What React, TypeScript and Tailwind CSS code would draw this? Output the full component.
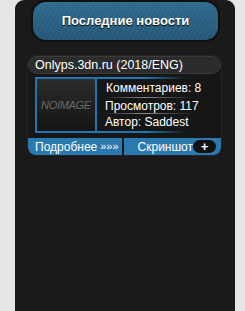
import React from 'react';

const news = {
  title: 'Onlyps.3dn.ru (2018/ENG)',
  comments: 8,
  views: 117,
  author: 'Saddest',
};

const Divider = () => (
  <div className="h-px w-[90px] ml-[6px] shrink-0 bg-[linear-gradient(90deg,transparent,#8a8a8a_45%,transparent)]" />
);

const BlueLine = () => (
  <div className="h-[2px] w-[90px] shrink-0 bg-[linear-gradient(90deg,#1e77b0,#1e77b0_55%,transparent)]" />
);

const App = () => {
  return (
    <div className="w-[245px] h-[311px] overflow-hidden bg-[#e6e6e6] font-['Liberation_Sans',sans-serif]">
      {/* Panel */}
      <div className="ml-[15px] mt-2 w-[220px] h-[330px] rounded-t-[9px] bg-[#1a1a1a]">
        {/* Header tab */}
        <div className="-mt-2 ml-[16px] mr-[15px] h-[42px] rounded-[15px] border-2 border-[#0f0f0f] bg-[#285d7e] bg-[repeating-linear-gradient(120deg,rgba(255,255,255,0.05)_0px,rgba(255,255,255,0.05)_1px,transparent_1px,transparent_4px),linear-gradient(180deg,#2f6b8f_0%,#245676_100%)] flex items-center justify-center">
          <span className="text-white font-bold text-[13px] [text-shadow:0_1px_1px_#000]">
            Последние новости
          </span>
        </div>

        {/* News item */}
        <div className="mt-[13px] ml-3 mr-[13px] rounded-[9px] bg-[#161616] border border-[#242424]">
          <div className="h-[18px] rounded-full bg-[#2c2c2c] border border-[#3a3a3a] flex items-center pl-[6px] text-white text-[12.5px] leading-none whitespace-nowrap">
            {news.title}
          </div>

          <div className="flex mt-[3px] pl-[7px]">
            <div className="w-[62px] h-[56px] shrink-0 border-2 border-[#1e77b0] bg-[linear-gradient(180deg,#2c2c2c,#141414)] flex items-center justify-center">
              <span className="text-[#6a6a6a] italic text-[11px] tracking-[-0.3px]">NOIMAGE</span>
            </div>
            <div className="flex flex-col flex-1 h-[56px] whitespace-nowrap text-white text-[12px] leading-none">
              <BlueLine />
              <div className="h-[18px] shrink-0 flex items-center pl-[9px]">Комментариев: {news.comments}</div>
              <Divider />
              <div className="h-[15px] shrink-0 flex items-center pl-[8px]">Просмотров: {news.views}</div>
              <Divider />
              <div className="h-[16px] shrink-0 flex items-center pl-[8px]">Автор: {news.author}</div>
              <div className="mt-auto"><BlueLine /></div>
            </div>
          </div>

          <div className="flex mt-[5px] h-[17px] gap-[2px]">
            <div className="w-[95px] rounded-bl-[8px] bg-[#2a7ab0] text-white text-[12px] leading-none flex items-center pl-[7px] whitespace-nowrap">
              Подробнее <span className="ml-[3px] text-[11px]">»»»</span>
            </div>
            <div className="flex-1 rounded-br-[8px] bg-[#2a7ab0] text-white text-[12px] leading-none flex items-center justify-between pl-[14px] pr-[5px]">
              <span>Скриншот</span>
              <span className="w-[23px] h-[13px] rounded-full bg-[#111] flex items-center justify-center text-[13px] font-bold">+</span>
            </div>
          </div>
        </div>
      </div>
    </div>
  );
};

export default App;
